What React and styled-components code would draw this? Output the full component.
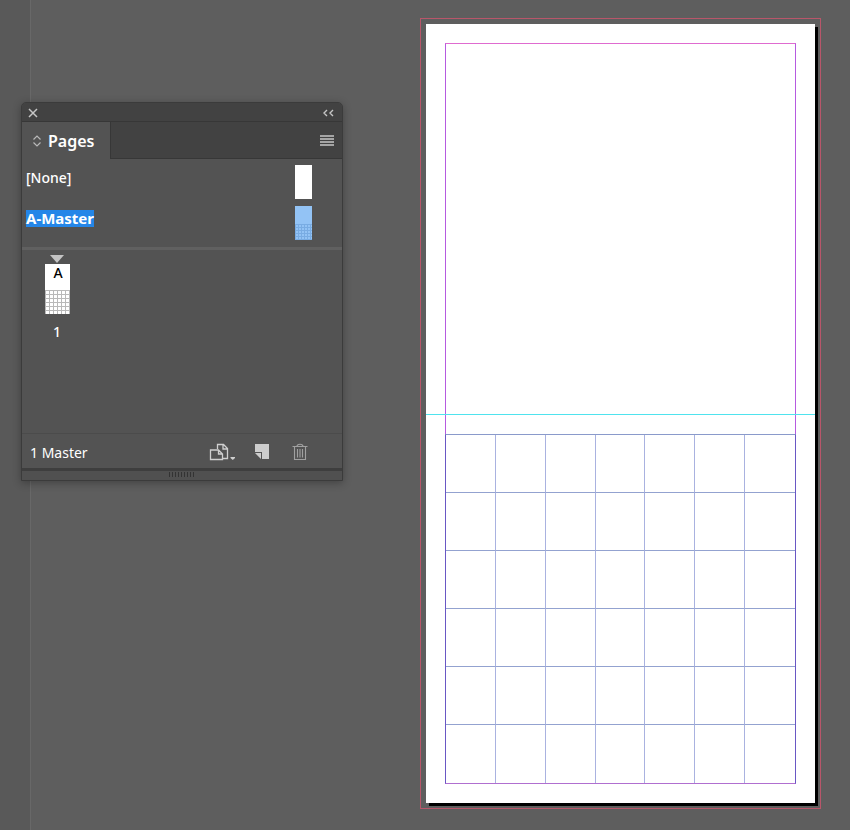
import React from "react";
import styled, { createGlobalStyle } from "styled-components";

const GlobalStyle = createGlobalStyle`
  *, *::before, *::after { box-sizing: border-box; }
  body {
    margin: 0;
    background: #5e5e5e;
    font-family: "Noto Sans", "Open Sans", sans-serif;
  }
`;

const Workspace = styled.main`
  display: grid;
  grid-template-columns: 322px minmax(0, 1fr);
  column-gap: 77px;
  min-height: 100vh;
  padding: 18px 29px 21px 21px;
  background: linear-gradient(to right, #595959 30px, #686868 30px, #686868 31px, #5e5e5e 31px);
`;

const Panel = styled.section`
  align-self: start;
  display: flex;
  flex-direction: column;
  margin-top: 84px;
  border: 1px solid #3b3b3b;
  border-radius: 5px 5px 0 0;
  background: #535353;
  color: #fff;
  box-shadow: 0 2px 9px rgba(0, 0, 0, 0.3);
  overflow: hidden;
`;

const IconButton = styled.button`
  display: flex;
  align-items: center;
  justify-content: center;
  width: ${(p) => p.$width}px;
  height: ${(p) => p.$height}px;
  padding: 0;
  border: 0;
  background: none;
  color: ${(p) => p.$color || "#c6c6c6"};
  svg { display: block; }
`;

const TitleBar = styled.header`
  display: flex;
  align-items: center;
  justify-content: space-between;
  height: 19px;
  padding: 1px 7px 0 4px;
  border-bottom: 1px solid #373737;
  background: #424242;
`;

const TabBar = styled.div`
  display: flex;
  align-items: stretch;
  height: 37px;
  background: #424242;
`;

const Tab = styled.button`
  display: flex;
  align-items: center;
  gap: 6px;
  width: 89px;
  padding: 0 0 0 10px;
  border: 0;
  border-right: 1px solid #373737;
  background: #535353;
  color: #fff;
  font: 600 16px/20px "Noto Sans", sans-serif;
`;

const TabRest = styled.div`
  display: flex;
  flex: 1;
  align-items: center;
  justify-content: flex-end;
  padding-right: 6px;
  border-bottom: 1px solid #373737;
`;

const MasterList = styled.div`
  display: flex;
  flex-direction: column;
  gap: 7px;
  padding: 6px 30px 7px 4px;
  border-bottom: 3px solid #606060;
`;

const MasterRow = styled.button`
  display: flex;
  align-items: center;
  justify-content: space-between;
  height: 34px;
  padding: 0;
  border: 0;
  background: none;
  color: #fff;
  font: ${(p) => (p.$selected ? "700 15px" : "500 14px")}/17px "Noto Sans", sans-serif;
`;

const MasterName = styled.span`
  margin-bottom: 9px;
  background: ${(p) => (p.$selected ? "#2486e8" : "transparent")};
`;

const PagesArea = styled.div`
  display: flex;
  align-items: flex-start;
  min-height: 183px;
  padding: 5px 20px;
`;

const PageItem = styled.button`
  display: flex;
  flex-direction: column;
  align-items: center;
  width: 30px;
  padding: 0;
  border: 0;
  background: none;
  color: #fff;
  font: 500 14px/18px "Noto Sans", sans-serif;
  svg { display: block; }
`;

const Thumb = styled.span`
  display: flex;
  flex-direction: column;
  width: ${(p) => p.$width}px;
  height: ${(p) => p.$height}px;
  margin: ${(p) => (p.$spaced ? "1px 0 9px" : "0")};
  background: ${(p) => p.$fill};
  color: #000;
`;

const ThumbTop = styled.span`
  flex: 1;
  padding-left: 2px;
  line-height: 18px;
  text-align: center;
`;

const ThumbGrid = styled.span`
  height: ${(p) => p.$height}px;
  background-image:
    linear-gradient(to right, ${(p) => p.$line} 1px, transparent 1px),
    linear-gradient(${(p) => p.$line} 1px, transparent 1px);
  background-size: ${(p) => p.$step}px ${(p) => p.$step}px;
`;

const Footer = styled.footer`
  display: flex;
  align-items: center;
  height: 38px;
  padding: 4px 30px 0 8px;
  border-top: 1px solid #4b4b4b;
  border-bottom: 3px solid #3e3e3e;
  font-size: 14px;
  line-height: 20px;
`;

const FooterTools = styled.div`
  display: flex;
  align-items: center;
  gap: 13px;
  margin: 0 0 2px auto;
`;

const Grip = styled.div`
  display: flex;
  justify-content: center;
  height: 9px;
  padding-top: 1px;
  background: #505050;
`;

const GripMarks = styled.span`
  width: 27px;
  height: 5px;
  background: repeating-linear-gradient(to right, #333 0 1px, transparent 1px 3px);
`;

const Bleed = styled.section`
  display: flex;
  padding: 5px;
  border: 1px solid #b9566a;
`;

const Sheet = styled.div`
  position: relative;
  display: flex;
  flex: 1;
  padding: 19px;
  background: #fff;
  box-shadow: 3px 3px 0 #000;
`;

const MarginFrame = styled.div`
  display: flex;
  flex: 1;
  flex-direction: column;
  border: 1px solid #b65ae0;
  border-top-color: #df6bd0;
`;

const PictureArea = styled.div`
  flex: 391;
`;

const Calendar = styled.div`
  display: grid;
  flex: 348;
  grid-template-columns: repeat(7, 1fr);
  grid-template-rows: repeat(6, 1fr);
  margin: 0 -1px -1px;
  border: 1px solid #6957c4;
  border-top-color: #8a9acb;
  border-bottom-color: #b06fd0;
`;

const DayCell = styled.div`
  border-right: ${(p) => (p.$lastColumn ? "0" : "1px solid #a9b2e0")};
  border-bottom: ${(p) => (p.$lastRow ? "0" : "1px solid #93a2d0")};
`;

const Guide = styled.div`
  position: absolute;
  top: 50%;
  right: 0;
  left: 0;
  height: 1px;
  background: #4fe3ee;
`;

const DAYS = 7;
const WEEKS = 6;

export default function App() {
  return (
    <>
      <GlobalStyle />
      <Workspace>
        <Panel aria-label="Pages panel">
          <TitleBar>
            <IconButton $width={14} $height={16} aria-label="Close">
              <svg width="10" height="10" viewBox="0 0 10 10" stroke="currentColor" strokeWidth="1.5">
                <path d="M1 1l8 8M9 1l-8 8" />
              </svg>
            </IconButton>
            <IconButton $width={14} $height={16} aria-label="Collapse">
              <svg width="12" height="8" viewBox="0 0 12 8" fill="none" stroke="currentColor" strokeWidth="1.4">
                <path d="M5 1L2 4l3 3M11 1L8 4l3 3" />
              </svg>
            </IconButton>
          </TitleBar>
          <TabBar>
            <Tab>
              <svg width="10" height="12" viewBox="0 0 10 12" fill="none" stroke="#b8b8b8" strokeWidth="1.2">
                <path d="M1.5 4.5L5 1l3.500 3.500M1.500 7.500L5 11l3.500-3.500" />
              </svg>
              Pages
            </Tab>
            <TabRest>
              <IconButton $width={18} $height={18} aria-label="Panel menu">
                <svg width="14" height="11" viewBox="0 0 14 11" stroke="currentColor" strokeWidth="1.4">
                  <path d="M0 1h14M0 4h14M0 7h14M0 10h14" />
                </svg>
              </IconButton>
            </TabRest>
          </TabBar>
          <MasterList>
            <MasterRow>
              <MasterName>[None]</MasterName>
              <Thumb $width={17} $height={34} $fill="#fff" />
            </MasterRow>
            <MasterRow $selected>
              <MasterName $selected>A-Master</MasterName>
              <Thumb $width={17} $height={34} $fill="#93c3f5">
                <ThumbTop />
                <ThumbGrid $height={16} $step={3} $line="#79ace3" />
              </Thumb>
            </MasterRow>
          </MasterList>
          <PagesArea>
            <PageItem>
              <svg width="14" height="8" viewBox="0 0 14 8" fill="#c4c4c4">
                <path d="M0 0h14L7 8z" />
              </svg>
              <Thumb $width={25} $height={50} $fill="#fff" $spaced>
                <ThumbTop>A</ThumbTop>
                <ThumbGrid $height={24} $step={4} $line="#b9b9b9" />
              </Thumb>
              1
            </PageItem>
          </PagesArea>
          <Footer>
            1 Master
            <FooterTools>
              <IconButton $width={28} $height={20} $color="#d0d0d0" aria-label="Edit page size">
                <svg width="27" height="18" viewBox="0 0 27 18" fill="none" stroke="currentColor" strokeWidth="1.3">
                  <path d="M8.500 6V1.500h6l4 4V15.500h-5M14 1.500v4.500h4.500" />
                  <path d="M1.500 7h8l4 4v5.500h-12zM9.500 7v4h4" />
                  <path d="M21.500 14h4.500v1L23.800 17l-2.300-2z" fill="currentColor" stroke="none" />
                </svg>
              </IconButton>
              <IconButton $width={26} $height={20} $color="#cdcdcd" aria-label="New page">
                <svg width="16" height="16" viewBox="0 0 16 16" fill="currentColor">
                  <path d="M1 0h14v15H8V8H1zM1 9h6v6z" />
                </svg>
              </IconButton>
              <IconButton $width={24} $height={20} $color="#a0a0a0" aria-label="Delete page">
                <svg width="16" height="18" viewBox="0 0 16 18" fill="none" stroke="currentColor" strokeWidth="1.1">
                  <path d="M.5 3.500h15M5 3.500C5 .5 11 .5 11 3.500M2.500 3.500v13h11v-13M5.500 6v8.500M8 6v8.500M10.500 6v8.500" />
                </svg>
              </IconButton>
            </FooterTools>
          </Footer>
          <Grip>
            <GripMarks />
          </Grip>
        </Panel>

        <Bleed aria-label="Page layout">
          <Sheet>
            <MarginFrame>
              <PictureArea />
              <Calendar>
                {Array.from({ length: DAYS * WEEKS }, (_, i) => (
                  <DayCell
                    key={i}
                    $lastColumn={i % DAYS === DAYS - 1}
                    $lastRow={i >= DAYS * (WEEKS - 1)}
                  />
                ))}
              </Calendar>
            </MarginFrame>
            <Guide />
          </Sheet>
        </Bleed>
      </Workspace>
    </>
  );
}
